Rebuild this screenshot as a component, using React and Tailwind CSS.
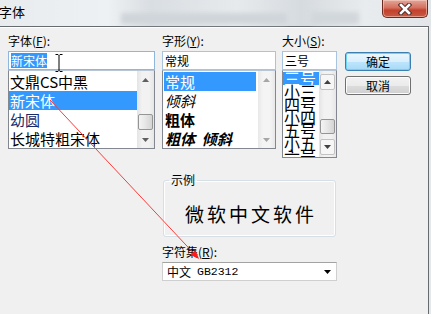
const FONT = "font-['Noto_Sans_CJK_SC','Noto_Sans',sans-serif]";

const Tri = ({ up, color = '#606060' }) => (
  <svg width="7" height="4" viewBox="0 0 7 4">
    {up ? <path d="M3.5 0 L7 4 L0 4 Z" fill={color} /> : <path d="M0 0 L7 0 L3.5 4 Z" fill={color} />}
  </svg>
);

const Label = ({ text, hot, tail = '):' }) => (
  <div className="h-[16px] mb-[2px] text-[12px] leading-[16px] text-black whitespace-nowrap">
    {text}(<span className="underline">{hot}</span>{tail}
  </div>
);

const Thumb = ({ h }) => (
  <div
    className={`${h} mx-[1px] rounded-[2px] border border-[#959595] bg-[linear-gradient(to_right,#f4f4f4,#e6e6e6_50%,#d4d4d4)]`}
  />
);

const fontItems = ['文鼎CS中黑', '新宋体', '幼圆', '长城特粗宋体'];
const styleItems = [
  { t: '常规', c: '' },
  { t: '倾斜', c: 'italic' },
  { t: '粗体', c: 'font-bold' },
  { t: '粗体  倾斜', c: 'font-bold italic' },
];
const sizeItems = ['三号', '小三', '四号', '小四', '五号', '小五', '六号'];

export default function App() {
  return (
    <div className={`relative w-[431px] h-[314px] overflow-hidden bg-[#e4e8eb] ${FONT}`}>
      {/* title bar (glass) */}
      <div className="h-[26px] flex items-start bg-[linear-gradient(to_right,#e9ecef_0%,#eef1f3_25%,#d9dee2_35%,#e7eaed_55%,#d6dbdf_70%,#e9ecee_85%,#e2e6e9_100%)]">
        <div className="shrink-0 ml-[-1px] pt-[4px] text-[13px] leading-[15px] text-black whitespace-nowrap">字体</div>
        <div className="shrink-0 ml-[96px] mt-[13px] w-[166px] h-[11px] rounded-[2px] bg-[#cfd5da] blur-[2px]" />
        <div className="shrink-0 ml-[24px] mt-[12px] w-[48px] h-[12px] rounded-[2px] bg-[#d2d7db] blur-[2px]" />
        <div className="flex-1" />
        <div className="shrink-0 mr-[3px] w-[46px] h-[18px] rounded-b-[5px] border border-t-0 border-[#6b2a22] bg-[linear-gradient(to_bottom,#e2a79b,#d5705f_45%,#c2412d_60%,#c75a44)] flex items-center justify-center shadow-[inset_0_0_0_1px_rgba(255,220,210,0.5)]">
          <svg width="14" height="12" viewBox="0 0 14 12">
            <path d="M3 2 L11 10 M11 2 L3 10" stroke="#4a2a26" strokeWidth="4.5" strokeLinecap="square" />
            <path d="M3 2 L11 10 M11 2 L3 10" stroke="#ffffff" strokeWidth="2.6" strokeLinecap="square" />
          </svg>
        </div>
      </div>

      {/* dialog client area */}
      <div className="w-[429px] h-[288px] border-t border-r border-[#666b70] bg-[#f0f0f0] shadow-[inset_0_1px_0_#ffffff] pl-[8px] pt-[6px]">
        <div className="flex items-start">
          {/* font column */}
          <div className="w-[147px]">
            <Label text="字体" hot="F" />
            <div className="h-[19px] border border-[#8fb6dc] bg-white pl-[2px] pt-[1px] flex items-start">
              <span className="bg-[#3399ff] text-white text-[12px] leading-[15px]">新宋体</span>
            </div>
            <div className="h-[79px] border border-[#828790] border-t-[#b6c6d6] bg-white flex">
              <div className="flex-1 pt-[1px]">
                {fontItems.map((t, i) => (
                  <div
                    key={t}
                    className={`h-[19px] px-[1px] text-[15px] leading-[19px] whitespace-nowrap ${
                      i === 1 ? 'bg-[#3399ff] text-white' : i === 2 ? 'text-[#1a2a6a]' : 'text-black'
                    }`}
                  >
                    {t}
                  </div>
                ))}
              </div>
              <div className="w-[17px] flex flex-col bg-[linear-gradient(to_right,#e4e4e4,#f2f2f2_30%,#f2f2f2_70%,#e6e6e6)]">
                <div className="h-[17px] flex items-center justify-center">
                  <Tri up />
                </div>
                <div className="h-[26px]" />
                <Thumb h="h-[16px]" />
                <div className="flex-1" />
                <div className="h-[17px] flex items-center justify-center">
                  <Tri />
                </div>
              </div>
            </div>
          </div>

          {/* style column */}
          <div className="ml-[7px] w-[114px]">
            <Label text="字形" hot="Y" />
            <div className="h-[19px] border border-[#a9c4df] bg-white pl-[2px] pt-[1px] text-[12px] leading-[15px] text-black">
              常规
            </div>
            <div className="h-[79px] border border-[#828790] border-t-[#b6c6d6] bg-white flex">
              <div className="flex-1 pt-[1px] pl-[1px]">
                {styleItems.map((s, i) => (
                  <div
                    key={s.t}
                    className={`h-[19px] px-[1px] text-[15px] leading-[19px] whitespace-pre ${s.c} ${
                      i === 0 ? 'bg-[#3399ff] text-white' : 'text-black'
                    }`}
                  >
                    {s.t}
                  </div>
                ))}
              </div>
              <div className="ml-[2px] w-[17px] flex flex-col bg-[linear-gradient(to_right,#e8e8e8,#f4f4f4_30%,#f4f4f4_70%,#e8e8e8)]">
                <div className="h-[17px] flex items-center justify-center">
                  <Tri up color="#a6a6a6" />
                </div>
                <div className="flex-1" />
                <div className="h-[17px] flex items-center justify-center">
                  <Tri color="#a6a6a6" />
                </div>
              </div>
            </div>
          </div>

          {/* size column */}
          <div className="ml-[6px] w-[55px]">
            <Label text="大小" hot="S" />
            <div className="h-[19px] border border-[#a9c4df] bg-white pl-[2px] pt-[1px] text-[12px] leading-[15px] text-black">
              三号
            </div>
            <div className="h-[88px] border border-[#828790] border-t-[#b6c6d6] bg-white flex overflow-hidden">
              <div className="flex-1 pt-[1px]">
                {sizeItems.map((t, i) => (
                  <div
                    key={t}
                    className={`h-[13px] px-[1px] text-[16px] leading-[13px] whitespace-nowrap ${
                      i === 0 ? 'bg-[#3399ff] text-white' : 'text-black'
                    }`}
                  >
                    {t}
                  </div>
                ))}
              </div>
              <div className="w-[17px] flex flex-col pt-[3px] bg-[linear-gradient(to_right,#e4e4e4,#f2f2f2_30%,#f2f2f2_70%,#e6e6e6)]">
                <div className="h-[16px] mx-[1px] rounded-[2px] border border-[#c2c2c2] bg-[#f6f6f6] flex items-center justify-center">
                  <Tri up color="#404040" />
                </div>
                <div className="h-[29px]" />
                <Thumb h="h-[15px]" />
                <div className="h-[5px]" />
                <div className="h-[16px] mx-[1px] rounded-[2px] border border-[#c2c2c2] bg-[#f6f6f6] flex items-center justify-center">
                  <Tri color="#404040" />
                </div>
              </div>
            </div>
          </div>

          {/* buttons */}
          <div className="ml-[8px] mt-[19px] w-[66px] flex flex-col gap-[5px]">
            <button className="h-[19px] rounded-[3px] border border-[#3c7fb1] bg-[linear-gradient(to_bottom,#eaf6fd,#d9f0fc_50%,#bee6fd_51%,#a7d9f5)] shadow-[inset_0_0_0_1px_#6fd3f8] text-[12px] leading-[15px] text-black">
              确定
            </button>
            <button className="h-[19px] rounded-[3px] border border-[#707070] bg-[linear-gradient(to_bottom,#f2f2f2,#ebebeb_50%,#dddddd_51%,#cfcfcf)] shadow-[inset_0_0_0_1px_#fcfcfc] text-[12px] leading-[15px] text-black">
              取消
            </button>
          </div>
        </div>

        {/* sample + charset */}
        <div className="ml-[154px] w-[175px]">
          <fieldset className="mt-[15px] ml-[1px] w-[173px] rounded-[3px] border border-[#d5dfe5] shadow-[inset_0_0_0_1px_#ffffff] px-0 pt-[14px] pb-[10px]">
            <legend className="ml-[5px] px-[2px] text-[12px] leading-[14px] text-black">示例</legend>
            <div className="h-[25px] text-center text-[19px] leading-[25px] tracking-[3px] pl-[3px] text-black">
              微软中文软件
            </div>
          </fieldset>
          <div className="mt-[7px]">
            <Label text="字符集" hot="R" />
          </div>
          <div className="mt-[1px] h-[19px] border border-[#cfcfcf] border-t-[#a3a3a3] bg-white flex items-center pl-[4px] pr-[5px]">
            <span className="text-[12px] leading-[15px] text-black">中文</span>
            <span className="ml-[6px] font-['Liberation_Mono',monospace] text-[11.5px] leading-[15px] text-black">GB2312</span>
            <div className="flex-1" />
            <Tri color="#000000" />
          </div>
        </div>
      </div>

      {/* red annotation arrow */}
      <svg className="absolute left-0 top-0 pointer-events-none" width="431" height="314">
        <line x1="50" y1="100" x2="193" y2="252.5" stroke="#ff3b3b" strokeWidth="1" />
        <polygon points="199,259 190.3,254.8 195.5,250" fill="#ff1a1a" />
      </svg>

      {/* I-beam cursor */}
      <svg className="absolute left-[55px] top-[54px] pointer-events-none" width="8" height="18">
        <path d="M0.5 0.5 H3 M5 0.5 H7.5 M3 0.5 L4 1.5 L5 0.5 M4 1.5 V16.5 M3 17.5 L4 16.5 L5 17.5 M0.5 17.5 H3 M5 17.5 H7.5" stroke="#000" strokeWidth="1" fill="none" />
      </svg>
    </div>
  );
}
